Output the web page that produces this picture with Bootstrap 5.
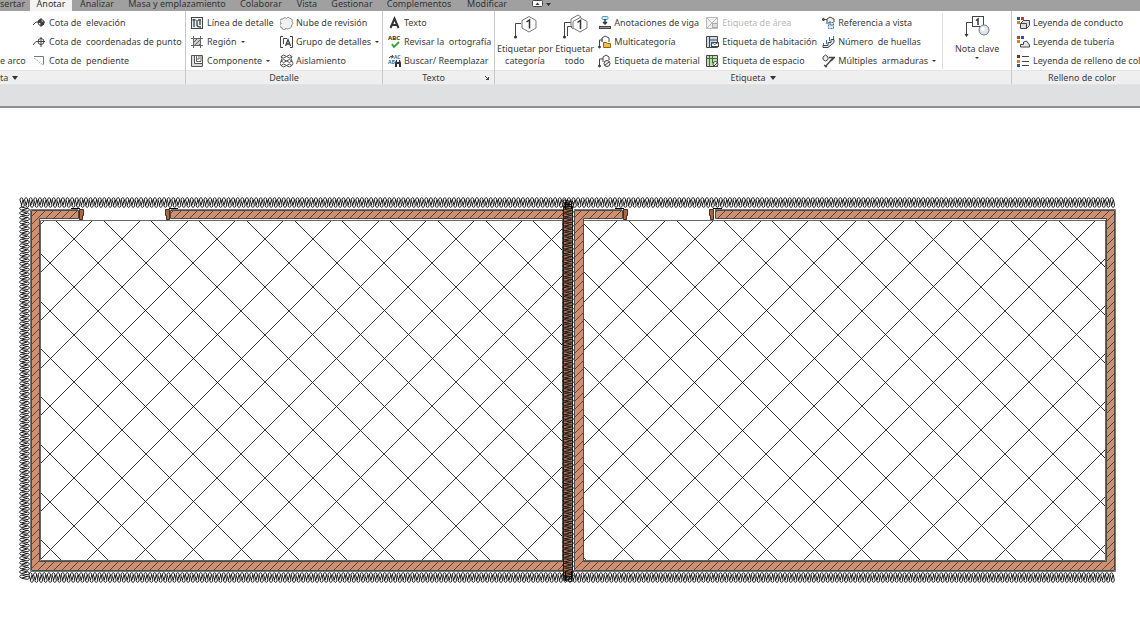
<!DOCTYPE html>
<html lang="es">
<head>
<meta charset="utf-8">
<meta name="viewport" content="width=device-width, initial-scale=1">
<title>Anotar</title>
<link href="https://cdn.jsdelivr.net/npm/bootstrap@5.3.0/dist/css/bootstrap.min.css" rel="stylesheet">
<script src="https://cdn.jsdelivr.net/npm/bootstrap@5.3.0/dist/js/bootstrap.bundle.min.js"></script>
<style>
  body { font-family: "Noto Sans", "Open Sans", sans-serif; font-size: 9px; line-height: 19px; color: #3c3c3c; background: #fff; overflow-x: hidden; }
  .tabbar { background: #a0a0a0; }
  .tabbar a { color: #333; line-height: 8px; height: 11px; text-decoration: none; white-space: nowrap; flex: none; }
  .tabbar .active { background: #f3f3f3; }
  .ribbon { border-bottom: 1px solid #e4e4e4; background: #efefef; }
  .panel { flex: none; border-right: 1px solid #c8c8c8; }
  .panel-tools { height: 59px; padding-top: 2px; background: #fff; }
  .panel-title { height: 14px; line-height: 13px; border-top: 1px solid #e6e6e6; }
  .p-dim { width: 186px; } .p-det { width: 197px; } .p-txt { width: 112px; } .p-tag { width: 517px; } .p-col { width: 140px; border: 0; }
  .inset-5 { padding-left: 5px; }
  .tool, .bigtool { border: 0; background: none; padding: 0; color: inherit; white-space: pre; }
  .tool { display: flex; align-items: center; gap: 2px; height: 19px; }
  .tool svg { width: 14px; height: 14px; flex: none; }
  .tool:disabled { color: #b9b9b9; }
  .bigtool { display: flex; flex-direction: column; align-items: center; line-height: 12px; height: 56px; }
  .bigtool svg { width: 28px; height: 27px; flex: none; margin-bottom: 3px; }
  .caret { width: 0; height: 0; border: 2px solid transparent; border-top-color: #333; border-bottom: 0; }
  .caret.wide { border-width: 3px; border-top-width: 4px; border-bottom: 0; }
  .bigtool .caret { margin-top: 2px; }
  .toolcol { flex: none; }
  .c-arc { width: 33px; } .c-a { width: 89px; } .c-cat { width: 61px; } .c-all { width: 40px; } .c-b { width: 112px; padding-left: 4px; } .c-c { width: 116px; } .c-d { width: 120px; } .c-key { width: 70px; border-left: 1px solid #dcdcdc; }
  .optbar { height: 23px; background: #dfe0e2; border-bottom: 2px solid #8f9092; }
  svg { fill: none; stroke: #444; stroke-width: 1; }
  .plan { display: block; width: 100%; height: auto; }
  .glyph { fill: #333; stroke: none; font-family: "Noto Sans", sans-serif; font-weight: 700; }
  .t-30 { width: 30px; } .t-34 { width: 34px; } .t-42 { width: 42px; } .t-50 { width: 50px; } .t-58 { width: 58px; } .t-78 { width: 78px; } .t-110 { width: 110px; } .t-56 { width: 56px; }
</style>
</head>
<body>
<nav class="tabbar d-flex text-center" aria-label="Fichas">
  <a href="#" class="t-30 text-start">sertar</a>
  <a href="#" class="t-42 active">Anotar</a>
  <a href="#" class="t-50">Analizar</a>
  <a href="#" class="t-110">Masa y emplazamiento</a>
  <a href="#" class="t-58">Colaborar</a>
  <a href="#" class="t-34">Vista</a>
  <a href="#" class="t-56">Gestionar</a>
  <a href="#" class="t-78">Complementos</a>
  <a href="#" class="t-58">Modificar</a>
  <a href="#" class="ps-3" aria-label="Minimizar"><svg class="d-block" width="20" height="9"><rect x=".5" y=".5" width="10" height="6" rx="1" fill="#fff"/><path d="M3.500 5h4L5.500 2.500z" fill="#333" stroke="none"/><path d="M14 3h5l-2.500 3z" fill="#333" stroke="none"/></svg></a>
</nav>

<div class="ribbon d-flex overflow-hidden">
  <section class="panel p-dim">
    <div class="panel-tools d-flex">
      <div class="toolcol c-arc d-flex flex-column justify-content-end"><button class="tool">e arco</button></div>
      <div class="toolcol">
        <button class="tool"><svg viewBox="0 0 14 14"><path d="M0 9l3-3h9M8 2v9"/><circle cx="8" cy="6.500" r="3"/><path d="M8 6.500V3.500A3 3 0 0 0 5 6.500zM8 6.500v3a3 3 0 0 0 3-3z" fill="#333"/></svg>Cota de  elevación</button>
        <button class="tool"><svg viewBox="0 0 14 14"><path d="M0 10l3-3.500h9M8 2v10"/><circle cx="8" cy="6.500" r="3"/></svg>Cota de  coordenadas de punto</button>
        <button class="tool"><svg viewBox="0 0 14 14"><path d="M1 2.500h9.500v8" stroke="#777"/><path d="M1 4l9 7" stroke="#8db1d8" stroke-dasharray="2 1"/></svg>Cota de  pendiente</button>
      </div>
    </div>
    <div class="panel-title d-flex align-items-center">ta<span class="caret wide ms-1"></span></div>
  </section>

  <section class="panel p-det">
    <div class="panel-tools d-flex inset-5">
      <div class="toolcol c-a">
        <button class="tool"><svg viewBox="0 0 14 14"><rect x=".5" y="1.500" width="11" height="11" fill="#e6eef6"/><path d="M3 3v8M1.500 4h3M6 4v5q0 2 4 2M7 4h3M9 4v5" stroke-width="1.300"/></svg>Línea de detalle</button>
        <button class="tool"><svg viewBox="0 0 14 14"><rect x="2.500" y="3.500" width="7" height="7" fill="#ccc"/><path d="M0 3.500h12M0 10.500h12M2.500 1v12M9.500 1v12M3 7l4-4M3 11l7-7M7 11l3-3" stroke="#666"/></svg>Región <span class="caret"></span></button>
        <button class="tool"><svg viewBox="0 0 14 14"><path d="M.5 1.500h11v11H.5zM3.500 1.500v8h8" stroke="#555"/><path d="M5.500 2v5.500H10V2M8 2v3H6" stroke="#666"/><path d="M1 2h2v8h8v2H1z" fill="#ddd" stroke="none"/></svg>Componente <span class="caret"></span></button>
      </div>
      <div class="toolcol">
        <button class="tool"><svg viewBox="0 0 14 14"><path d="M3 3a2 2 0 0 1 3.500-.5 2 2 0 0 1 3.500 0 2 2 0 0 1 2 3 2 2 0 0 1-.5 3.500 2 2 0 0 1-2 3 2 2 0 0 1-3.500 0 2 2 0 0 1-4-.5 2 2 0 0 1-.5-4A2 2 0 0 1 3 3z" stroke="#888" fill="#f1f1f1"/></svg>Nube de revisión</button>
        <button class="tool"><svg viewBox="0 0 14 14"><path d="M3 1.500H.5v11H3M10 1.500h2.500v11H10M3.500 9V3.500H7"/><path d="M5.500 11L8 4.500l2.500 6.500M6.500 9h3" stroke-width="1.300"/></svg>Grupo de detalles <span class="caret"></span></button>
        <button class="tool"><svg viewBox="0 0 14 14"><path d="M1 2.500q2.500-3 5.500 0t5.500 0M1 2.500q2.500 3 5.500 0t5.500 0M1 7q2.500-3 5.500 0t5.500 0M1 7q2.500 3 5.500 0t5.500 0M1 11.500q2.500-3 5.500 0t5.500 0M1 11.500q2.500 3 5.500 0t5.500 0M1 2.500q2 2 0 4.500t0 4.500M12 2.500q-2 2 0 4.500t0 4.500" stroke="#555"/></svg>Aislamiento</button>
      </div>
    </div>
    <div class="panel-title text-center">Detalle</div>
  </section>

  <section class="panel p-txt">
    <div class="panel-tools inset-5">
      <button class="tool"><svg viewBox="0 0 14 14"><path d="M2.500 12L6.500 2.500l4 9.500M4 9h5" stroke="#333" stroke-width="2"/></svg>Texto</button>
      <button class="tool"><svg viewBox="0 0 14 14"><text x="0" y="5" font-size="6" class="glyph">ABC</text><path d="M4 9l2 3 5-5" stroke="#3fa535" stroke-width="2"/></svg>Revisar la  ortografía</button>
      <button class="tool"><svg viewBox="0 0 14 14"><path d="M1 4q2-3 4-1M4 1l1.500 2L3 4"/><text x="6" y="5" font-size="5" class="glyph" style="fill:#36739d">AC</text><text x="0" y="10" font-size="5" class="glyph" style="fill:#36739d">AB</text><path d="M7 13V9l1-3h1v2h2V6h1l1 3v4h-2v-3H9v3z" fill="#333" stroke="none"/></svg>Buscar/ Reemplazar</button>
    </div>
    <div class="panel-title d-flex justify-content-end align-items-center pe-1"><span class="flex-fill text-center">Texto</span><svg width="6" height="6"><path d="M1 1l4 4M4.500 2v2.500H2" /></svg></div>
  </section>

  <section class="panel p-tag">
    <div class="panel-tools d-flex">
      <button class="bigtool c-cat"><svg viewBox="0 0 28 27"><path d="M10 10.500H4.500V23"/><path d="M18 3.500l7 4v7.500l-7 4-7-4V7.500z" stroke="#777"/><circle cx="4.500" cy="24" r="1.500" fill="#333" stroke="none"/><path d="M15.500 9l3-2v8.500" stroke="#333" stroke-width="1.500"/></svg>Etiquetar por
categoría</button>
      <button class="bigtool c-all"><svg viewBox="0 0 28 27"><path d="M10 9.500H3.500V23M11 13.500H6.500V23"/><path d="M19 4.500l7 4V15l-7 4-7-4V8.500zM12 16l-2-2V6l7-4 3 2" stroke="#777"/><circle cx="3.500" cy="24" r="1.500" fill="#333" stroke="none"/><path d="M16.500 9.500l3-2V16" stroke="#333" stroke-width="1.500"/></svg>Etiquetar
todo</button>
      <div class="toolcol c-b">
        <button class="tool"><svg viewBox="0 0 14 14"><rect x="4" y=".5" width="6" height="3" rx="1" stroke="#4b9dc2" fill="#d6eef8"/><path d="M7 3v5M5 6l2 2 2-2" stroke-width="1.500" stroke="#335"/><rect x="1.500" y="10.500" width="11" height="2" fill="#999"/></svg>Anotaciones de viga</button>
        <button class="tool"><svg viewBox="0 0 14 14"><path d="M1.500 12V5H5M4 7V3l3-2 4 2v4"/><circle cx="1.500" cy="12" r="1" fill="#333"/><path d="M5.500 7.500h3l1 1h3v4h-7z" fill="#f1bd51" stroke="#8b651d"/></svg>Multicategoría</button>
        <button class="tool"><svg viewBox="0 0 14 14"><path d="M1.500 12V5H5M5 8V3l3-2 3 2v3"/><circle cx="1.500" cy="12" r="1" fill="#333"/><circle cx="9" cy="9.500" r="3" fill="#eee"/><path d="M7 11l4-3"/></svg>Etiqueta de material</button>
      </div>
      <div class="toolcol c-c">
        <button class="tool" disabled><svg viewBox="0 0 14 14"><path d="M.5 1.500h11v11H.5zM1 12L11 2M1 2l10 10" stroke="#bbb" fill="#eee"/><rect x="6.500" y="7.500" width="5" height="4" fill="#ddd" stroke="#aaa"/></svg>Etiqueta de área</button>
        <button class="tool"><svg viewBox="0 0 14 14"><path d="M.5 1.500h11v11H.5zM3.500 2v10M4 5h7" fill="#c9dcef"/><rect x="5.500" y="7.500" width="7" height="4" fill="#fff"/><path d="M5.500 7.500l3 2 4-2" stroke="#35658e"/></svg>Etiqueta de habitación</button>
        <button class="tool"><svg viewBox="0 0 14 14"><path d="M.5 1.500h11v11H.5z" fill="#bfe0a9"/><path d="M.5 4.500h11M3.500 2v10M6.500 2v7" stroke="#496849"/><circle cx="9.500" cy="10" r="2.500" fill="#eee"/><path d="M8 12l4-4"/></svg>Etiqueta de espacio</button>
      </div>
      <div class="toolcol c-d">
        <button class="tool"><svg viewBox="0 0 14 14"><path d="M0 3.500h5M1 2v3l2-1.500zM5 8V3l3-2 4 2v3" fill="#eee"/><rect x="6.500" y="6.500" width="5" height="6" fill="#d6eef8" stroke="#4277a8" stroke-dasharray="2 1"/><path d="M8 5v4h3" stroke="#4277a8"/></svg>Referencia a vista</button>
        <button class="tool"><svg viewBox="0 0 14 14"><path d="M1 12.500h5l6-5V4.500H9v3H6v3H1z" fill="#d8e8f6"/><path d="M1.500 10V8M4.500 9V5M7.500 6V2M11.500 4V1" stroke="#36739d"/></svg>Número  de huellas</button>
        <button class="tool"><svg viewBox="0 0 14 14"><path d="M1 3l2.500-2L6 3v2.500L3.500 7 1 5.500z" fill="#eee"/><path d="M3 13l8-9M7 3.500h6M9 7l3-3M2 11l3 2" stroke-width="1.300"/></svg>Múltiples  armaduras <span class="caret"></span></button>
      </div>
      <button class="bigtool c-key"><svg viewBox="0 0 28 27"><path d="M9 9.500H3.500V22"/><rect x="9.500" y="3.500" width="11" height="10"/><path d="M1.500 21h4l-2 3z" fill="#333" stroke="none"/><path d="M13 7.500l2-1.500v6" stroke="#333" stroke-width="1.500"/><circle cx="21" cy="17" r="5" fill="#dfe5ea" stroke="#777"/><circle cx="20" cy="16" r="2" fill="#fff" stroke="none"/></svg>Nota clave<span class="caret"></span></button>
    </div>
    <div class="panel-title d-flex justify-content-center align-items-center">Etiqueta<span class="caret wide ms-1"></span></div>
  </section>

  <section class="panel p-col">
    <div class="panel-tools inset-5">
      <button class="tool"><svg viewBox="0 0 14 14"><path d="M3.500 7.500l3-3h6v5l-3 3h-6z" fill="#ddd"/><path d="M3.500 7.500h6v5"/><path d="M0 1h3v3H0z" fill="#36549d" stroke="none"/><path d="M4 1h3v3H4z" fill="#c03a30" stroke="none"/><path d="M0 5h3v3H0z" fill="#d98023" stroke="none"/></svg>Leyenda de conducto</button>
      <button class="tool"><svg viewBox="0 0 14 14"><path d="M3.500 9.500h3V7l3-1 3 4v2h-9z" fill="#e6e6e6"/><path d="M0 1h3v3H0z" fill="#c03a30" stroke="none"/><path d="M4 1h3v3H4z" fill="#36549d" stroke="none"/><path d="M0 5h3v3H0z" fill="#d98023" stroke="none"/></svg>Leyenda de tubería</button>
      <button class="tool"><svg viewBox="0 0 14 14"><path d="M0 1h3v3H0z" fill="#8d2522" stroke="none"/><path d="M0 6h3v3H0z" fill="#d98023" stroke="none"/><path d="M0 10h3v3H0z" fill="#36549d" stroke="none"/><path d="M5 2.500h7M5 7.500h7M5 11.500h7"/></svg>Leyenda de relleno de color</button>
    </div>
    <div class="panel-title text-center">Relleno de color</div>
  </section>
</div>
<div class="optbar"></div>

<main>
<svg class="plan" viewBox="0 108 1140 519" role="img" aria-label="Planta">
  <defs>
    <clipPath id="rooms"><path d="M40 220h522v341H40zM583 220h523v341H583z"/></clipPath>
    <pattern id="brick" patternUnits="userSpaceOnUse" width="8" height="8"><rect width="8" height="8" fill="#cd9072" stroke="none"/><path d="M-1 9L9-1" stroke="#5a3828" stroke-width=".9"/></pattern>
  </defs>
  <path id="tiles" clip-path="url(#rooms)" stroke="#222" stroke-width=".9"/>
  <g stroke="#000" stroke-width=".9">
    <path id="battTop"/><path id="battBottom"/><path id="battLeft"/>
  </g>
  <g stroke="#777">
    <path d="M78 209.500H30.500v362h1085v-362H715M171 209.500h392M574 209.500h48"/>
    <path d="M40.500 220.500h522v340h-522zM583.500 220.500h522v340h-522z" stroke="#666"/>
  </g>
  <g fill="url(#brick)" stroke="#4a4a4a">
    <path d="M78.500 210.500v8h-39v343h524v9h-532v-360z"/>
    <path d="M170.500 210.500h393v8h-393z"/>
    <path d="M622.500 210.500v8h-39v343h523v-343h-391v-8h399v360h-540v-360z"/>
  </g>
  <rect x="563.500" y="206.500" width="9" height="370" fill="#b0755a" stroke="#222"/>
  <path id="battMid" stroke="#111" stroke-width=".9"/>
  <path d="M565 204.500h6M565.500 202v7M571.500 202v7M565.500 571v9M571.500 571v9" stroke="#000"/>
  <g fill="#a86a45" stroke="#4a2c1e">
    <path d="M79.500 209.500h4v6h-1v4h-3zM165.500 209.500h4v10h-3v-4h-1zM623.500 209.500h4v6h-1v4h-3zM709.500 209.500h4v10h-3v-4h-1z"/>
  </g>
  <path d="M71 208.500h9M169 208.500h9M615 208.500h9M713 208.500h9" stroke="#000"/>
</svg>
</main>
<script>
  // Floor tiling: two families of diagonals with the same spacing
  const step = 47.75;
  let d = '';
  for (let k = -30; k < 20; k++) {
    const c = Math.round(165 + k * step);
    d += `M${220 - c} 220L${561 - c} 561`;
  }
  for (let k = -5; k < 35; k++) {
    const s = Math.round(313 + k * step);
    d += `M${s - 220} 220L${s - 561} 561`;
  }
  document.getElementById('tiles').setAttribute('d', d);

  // Batt insulation: overlapping loops along a strip
  function batt(id, from, to, edge, depth, vertical) {
    const pitch = 4.6;
    const pt = (a, b) => vertical ? `${b} ${a}` : `${a} ${b}`;
    let p = '';
    for (let a = from; a < to - 2; a += pitch) {
      const n = a + pitch / 2;
      p += `M${pt(a, edge + 2)}C${pt(a, edge - 1)} ${pt(a + 3, edge - 1)} ${pt(a + 3, edge + 2)}`;
      p += `L${pt(a + 1.6, edge + depth - 2)}M${pt(a, edge + 2)}L${pt(a + 1.6, edge + depth - 2)}`;
      p += `M${pt(n - 1, edge + depth - 2)}C${pt(n - 1, edge + depth + 1)} ${pt(n + 2, edge + depth + 1)} ${pt(n + 2, edge + depth - 2)}L${pt(n + 1, edge + 2)}`;
    }
    document.getElementById(id).setAttribute('d', p);
  }
  batt('battTop', 20, 1116, 198, 9, false);
  batt('battBottom', 29, 1116, 573, 9, false);
  batt('battLeft', 207, 581, 20, 9, true);
  batt('battMid', 200, 581, 563, 10, true);
</script>
</body>
</html>
